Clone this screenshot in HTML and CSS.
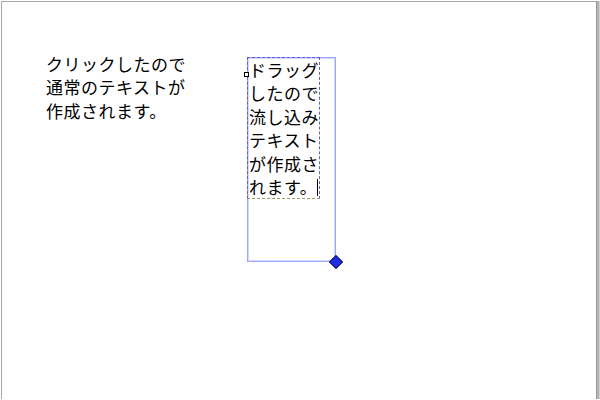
FILE: index.html
```html
<!DOCTYPE html>
<html lang="ja">
<head>
    <meta charset="UTF-8">
    <title>テキストツール</title>
    <link rel="stylesheet" href="styles.css">
</head>
<body>
    <div class="canvas">
        <div class="text-object plain">
            クリックしたので<br>
            通常のテキストが<br>
            作成されます。
        </div>

        <div class="flow-frame">
            <div class="flow-text">ドラッグしたので流し込みテキストが作成されます。<span class="caret"></span></div>
            <span class="anchor"></span>
            <span class="resize-handle"></span>
        </div>
    </div>
</body>
</html>
```

FILE: styles.css
```css
body {
    margin: 0;
    background: #fff;
    overflow: hidden;
}

.canvas {
    position: relative;
    width: 594px;
    height: 397px;
    margin: 1px 0 0 1px;
    background: #fff;
    border-top: 1px solid #a8a8a8;
    border-left: 1px solid #a8a8a8;
    box-shadow: 1px 0 0 #9a9a9a, 3px 0 0 #b4b4b4, 5px 0 0 #d0d0d0;
    font-family: "Noto Sans CJK JP", "DejaVu Sans", sans-serif;
    font-size: 17px;
    letter-spacing: 0.5px;
    line-height: 23.4px;
    color: #000;
}

.text-object {
    position: absolute;
    white-space: nowrap;
}

.plain {
    left: 44px;
    top: 50px;
}

.flow-frame {
    position: absolute;
    left: 245px;
    top: 55px;
    width: 87px;
    height: 203px;
    border: 1px solid #9ea6f6;
    box-shadow: inset 0 0 0 1px #d4d8fc;
}

.flow-text {
    width: 70px;
    padding-left: 1px;
    margin: -1px 0 0 -1px;
    border-top: 1px dashed #5c5cd6;
    border-right: 1px dashed #5c5cd6;
    border-bottom: 1px dashed #9c9c6a;
    border-left: 1px dashed #5c5cd6;
    word-break: break-all;
}

.caret {
    display: inline-block;
    width: 1px;
    height: 17px;
    margin-left: 0;
    margin-right: -4px;
    vertical-align: -2px;
    background: #000;
}

.anchor {
    position: absolute;
    left: -4px;
    top: 14px;
    width: 3px;
    height: 3px;
    border: 1px solid #000;
    background: #fff;
}

.resize-handle {
    position: absolute;
    right: -6px;
    bottom: -6px;
    width: 8px;
    height: 8px;
    background: #1e2ee6;
    border: 1px solid #101060;
    transform: rotate(45deg);
}
```
